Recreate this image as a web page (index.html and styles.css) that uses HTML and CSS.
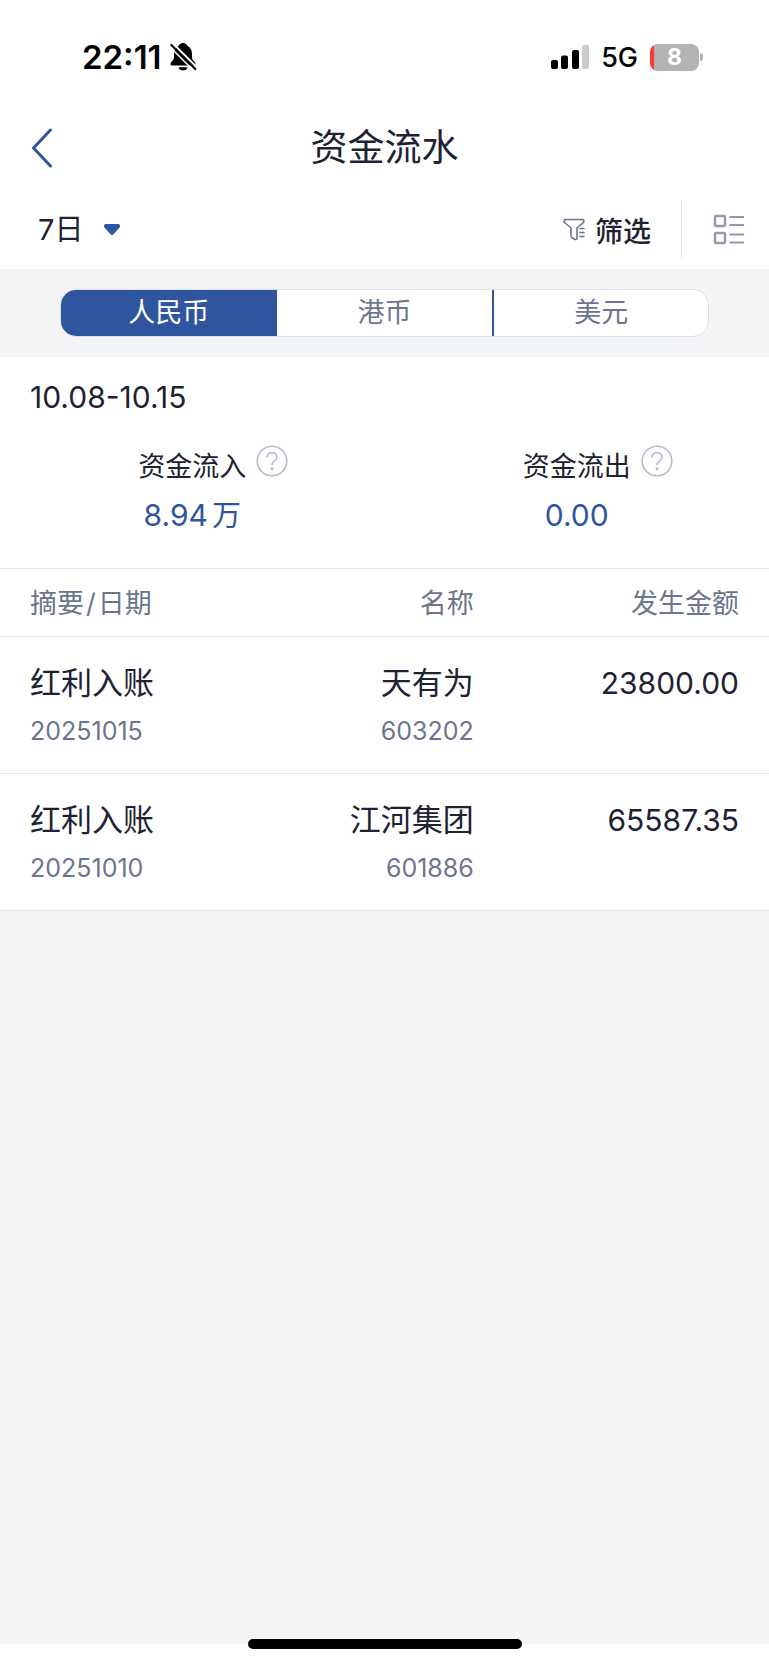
FILE: index.html
```html
<!DOCTYPE html>
<html lang="zh-CN">
<head>
<meta charset="utf-8">
<meta name="viewport" content="width=device-width, initial-scale=1">
<title>资金流水</title>
<link rel="stylesheet" href="styles.css">
</head>
<body>
<div class="screen">
  <div class="status">
    <div class="status-group">
      <span class="clock">22:11</span>
      <svg class="bell" width="28" height="30" viewBox="0 0 28 30" aria-hidden="true">
        <path d="M14 1C11.500 1 10.200 2.600 9.700 3.700C6.200 5.500 5 8.600 5 12V15.500C5 18.500 1.500 19.500 1.500 22C1.500 23 2.200 23.500 3.300 23.500H24.700C25.800 23.500 26.500 23 26.500 22C26.500 19.500 23 18.500 23 15.500V12C23 8.600 21.800 5.500 18.300 3.700C17.800 2.600 16.500 1 14 1Z" fill="#000"/>
        <path d="M9.500 25.200H18.500C18 27.300 16.300 28.500 14 28.500S10 27.300 9.500 25.200Z" fill="#000"/>
        <path d="M3.500 1L29 26.500" stroke="#fff" stroke-width="2"/>
        <path d="M2.300 3L26.300 27" stroke="#000" stroke-width="2.200" stroke-linecap="round"/>
        <path d="M0 4L24 28" stroke="#fff" stroke-width="1.500"/>
      </svg>
    </div>
    <div class="status-group status-right">
      <svg width="38" height="25" viewBox="0 0 38 25" aria-hidden="true">
        <rect x="0" y="15" width="7" height="9" rx="2"/>
        <rect x="10" y="10.500" width="7" height="13.500" rx="2"/>
        <rect x="21" y="5" width="7" height="19" rx="2"/>
        <rect x="31" y="0" width="7" height="24" rx="2" fill="#ccc"/>
      </svg>
      <span class="network">5G</span>
      <span class="battery"><span class="battery-level">8</span></span>
    </div>
  </div>

  <header class="header">
    <button class="back" type="button" aria-label="返回">
      <svg width="22" height="40" viewBox="0 0 22 40" aria-hidden="true"><path d="M19.500 2L2.500 20L19.500 38" fill="none" stroke="#2f559f" stroke-width="3" stroke-linecap="round" stroke-linejoin="round"/></svg>
    </button>
    <h1 class="title">资金流水</h1>
  </header>

  <div class="toolbar">
    <label class="period">
      <select class="period-select" aria-label="时间范围"><option>7日</option></select>
      <svg width="18" height="12" viewBox="0 0 18 12" aria-hidden="true"><path d="M2.500 0H15.500Q18 1 16.500 3.500L10.500 10.300Q9 11.500 7.500 10.300L1.500 3.500Q0 1 2.500 0Z" fill="#2f559f"/></svg>
    </label>
    <button class="filter" type="button">
      <svg width="22" height="23" viewBox="0 0 22 23" fill="none" stroke="#6b768e" stroke-width="1.600" stroke-linejoin="round" stroke-linecap="round" aria-hidden="true">
        <path d="M2 1.500H20Q21.500 2.500 20.500 4.500L14 10V20.500Q13 22 11.500 21.200L9.300 20Q8 19.500 8 18V10L1.500 4.500Q0.500 2.500 2 1.500Z"/>
        <path d="M17 10.500H21M17 14.500H21M17 18.500H21"/>
      </svg>
      筛选
    </button>
    <button class="layout" type="button" aria-label="列表视图">
      <svg width="31" height="31" viewBox="0 0 31 31" fill="none" stroke="#949aab" stroke-width="2" aria-hidden="true">
        <rect x="2" y="2" width="10" height="10" rx="1" stroke-width="2.500"/><rect x="2" y="19" width="10" height="10" rx="1" stroke-width="2.500"/>
        <path d="M16.500 3H31M16.500 11H31M16.500 20.500H31M16.500 28.500H31"/>
      </svg>
    </button>
  </div>

  <div class="currency">
    <div class="segments" role="tablist" aria-label="币种">
      <button class="segment segment-active" type="button" role="tab" aria-selected="true">人民币</button>
      <button class="segment" type="button" role="tab" aria-selected="false">港币</button>
      <button class="segment segment-divided" type="button" role="tab" aria-selected="false">美元</button>
    </div>
  </div>

  <main class="content">
    <p class="range">10.08-10.15</p>
    <div class="summary">
      <section class="flow">
        <h2 class="flow-label">资金流入</h2>
        <button class="help" type="button" aria-label="资金流入说明">
          <svg width="32" height="32" viewBox="0 0 32 32" fill="none" stroke="#b5bac8" stroke-width="1.600" aria-hidden="true"><circle cx="16" cy="16" r="14.800"/><path d="M10.800 12.500C11 9.500 13 7.800 16 7.800S21 9.600 21 12.200C21 16 16 16 16 20.200"/><circle cx="16" cy="23.700" r="1.500" fill="#b5bac8" stroke="none"/></svg>
        </button>
        <p class="flow-value">8.94<span class="unit">万</span></p>
      </section>
      <section class="flow">
        <h2 class="flow-label">资金流出</h2>
        <button class="help" type="button" aria-label="资金流出说明">
          <svg width="32" height="32" viewBox="0 0 32 32" fill="none" stroke="#b5bac8" stroke-width="1.600" aria-hidden="true"><circle cx="16" cy="16" r="14.800"/><path d="M10.800 12.500C11 9.500 13 7.800 16 7.800S21 9.600 21 12.200C21 16 16 16 16 20.200"/><circle cx="16" cy="23.700" r="1.500" fill="#b5bac8" stroke="none"/></svg>
        </button>
        <p class="flow-value">0.00</p>
      </section>
    </div>

    <table class="records">
      <thead>
        <tr><th class="col-type">摘要<span class="slash">/</span>日期</th><th class="col-name">名称</th><th class="col-amount">发生金额</th></tr>
      </thead>
      <tbody>
        <tr>
          <td class="col-type"><div class="main">红利入账</div><div class="sub">20251015</div></td>
          <td class="col-name"><div class="main">天有为</div><div class="sub">603202</div></td>
          <td class="col-amount"><div class="amount">23800.00</div></td>
        </tr>
        <tr>
          <td class="col-type"><div class="main">红利入账</div><div class="sub">20251010</div></td>
          <td class="col-name"><div class="main">江河集团</div><div class="sub">601886</div></td>
          <td class="col-amount"><div class="amount">65587.35</div></td>
        </tr>
      </tbody>
    </table>
  </main>
  <div class="rest"></div>
  <div class="home-area"><div class="home-bar"></div></div>
</div>
</body>
</html>
```
FILE: styles.css
```css
* {
  box-sizing: border-box;
}

body {
  margin: 0;
  background: #fff;
  color: #1d2333;
  font-family: Inter, "Noto Sans CJK SC", sans-serif;
}

h1,
h2,
p {
  margin: 0;
  font-weight: 400;
}

button,
select {
  margin: 0;
  padding: 0;
  border: 0;
  background: none;
  color: inherit;
  font: inherit;
}

svg {
  display: block;
  flex: none;
}

.screen {
  display: flex;
  flex-direction: column;
  min-height: 100vh;
}

.status {
  display: flex;
  align-items: center;
  justify-content: space-between;
  height: 114px;
  padding: 0 66px 0 82px;
  color: #000;
}

.status-group {
  display: flex;
  align-items: center;
  gap: 7px;
}

.status-right {
  gap: 12px;
}

.clock {
  font-size: 33px;
  font-weight: 600;
}

.network {
  font-size: 27px;
  font-weight: 500;
}

.battery {
  display: flex;
  align-items: center;
}

.battery::after {
  content: "";
  width: 3px;
  height: 8px;
  margin-left: 1px;
  border-radius: 0 3px 3px 0;
  background: #b3b3b3;
}

.battery-level {
  width: 49px;
  border-radius: 8px;
  background: linear-gradient(to right, #ff3b30 4px, #b3b3b3 4px);
  color: #fff;
  font-size: 23px;
  font-weight: 700;
  line-height: 27px;
  text-align: center;
}

.header {
  display: grid;
  grid-template-columns: 1fr auto 1fr;
  align-items: center;
  height: 68px;
  padding: 0 31px;
}

.back {
  justify-self: start;
}

.title {
  font-size: 37px;
  line-height: 48px;
}

.toolbar {
  display: flex;
  align-items: center;
  height: 87px;
  padding: 8px 25px 0 38px;
}

.period {
  display: flex;
  align-items: center;
  gap: 20px;
  margin-right: auto;
  font-size: 29px;
}

.period-select {
  appearance: none;
  field-sizing: content;
}

.filter {
  display: flex;
  align-items: center;
  gap: 10px;
  padding-right: 30px;
  font-size: 28px;
  font-weight: 500;
}

.layout {
  padding: 14px 0 14px 31px;
  border-left: 1px solid #e6e8eb;
}

.currency {
  padding: 20px 60px;
  background: #f2f4f6;
}

.segments {
  display: grid;
  grid-template-columns: repeat(3, 1fr);
  overflow: hidden;
  border: 1px solid #dcdfe5;
  border-radius: 16px;
  background: #fff;
}

.segment {
  color: #6b768e;
  font-size: 27px;
  line-height: 46px;
}

.segment-active {
  background: #2f559f;
  color: #fff;
}

.segment-divided {
  border-left: 2px solid #2f559f;
}

.range {
  padding: 20px 30px;
  font-size: 30px;
  line-height: 40px;
}

.summary {
  display: grid;
  grid-template-columns: 1fr 1fr;
  padding: 8px 0 27px;
}

.flow {
  display: grid;
  grid-template-columns: 1fr auto 1fr;
  align-items: start;
}

.flow-label {
  grid-column: 2;
  font-size: 27px;
  line-height: 44px;
}

.help {
  justify-self: start;
  margin-left: 10px;
}

.flow-value {
  grid-column: 1 / -1;
  padding: 2px 0;
  color: #2f559f;
  font-size: 30px;
  line-height: 48px;
  text-align: center;
}

.unit {
  margin-left: 4px;
  font-size: 29px;
  line-height: 1;
}

.records {
  width: 100%;
  border-collapse: collapse;
  table-layout: fixed;
}

.records tr {
  border-top: 1px solid #e6e8eb;
}

.records tbody tr:last-child {
  border-bottom: 1px solid #e6e8eb;
}

.records th {
  padding-top: 15px;
  padding-bottom: 12px;
  color: #6b768e;
  font-size: 27px;
  font-weight: 400;
  line-height: 40px;
}

.records td {
  padding-top: 24px;
  padding-bottom: 24px;
  vertical-align: top;
}

.records .col-type {
  width: 30%;
  padding-left: 30px;
  text-align: left;
}

.records .col-name {
  width: 32%;
  padding-right: 3px;
  text-align: right;
}

.records .col-amount {
  padding-right: 30px;
  text-align: right;
}

.slash {
  margin: 0 2px;
}

.main {
  font-size: 31px;
  line-height: 44px;
}

.amount {
  font-size: 30px;
  line-height: 44px;
}

.sub {
  padding-top: 8px;
  color: #6b768e;
  font-size: 25px;
  line-height: 36px;
}

.rest {
  flex: 1;
  background: #f2f4f6;
}

.home-area {
  position: relative;
  height: 21px;
}

.home-bar {
  position: absolute;
  top: -5px;
  left: 50%;
  width: 274px;
  height: 10px;
  margin-left: -137px;
  border-radius: 5px;
  background: #000;
}
```
